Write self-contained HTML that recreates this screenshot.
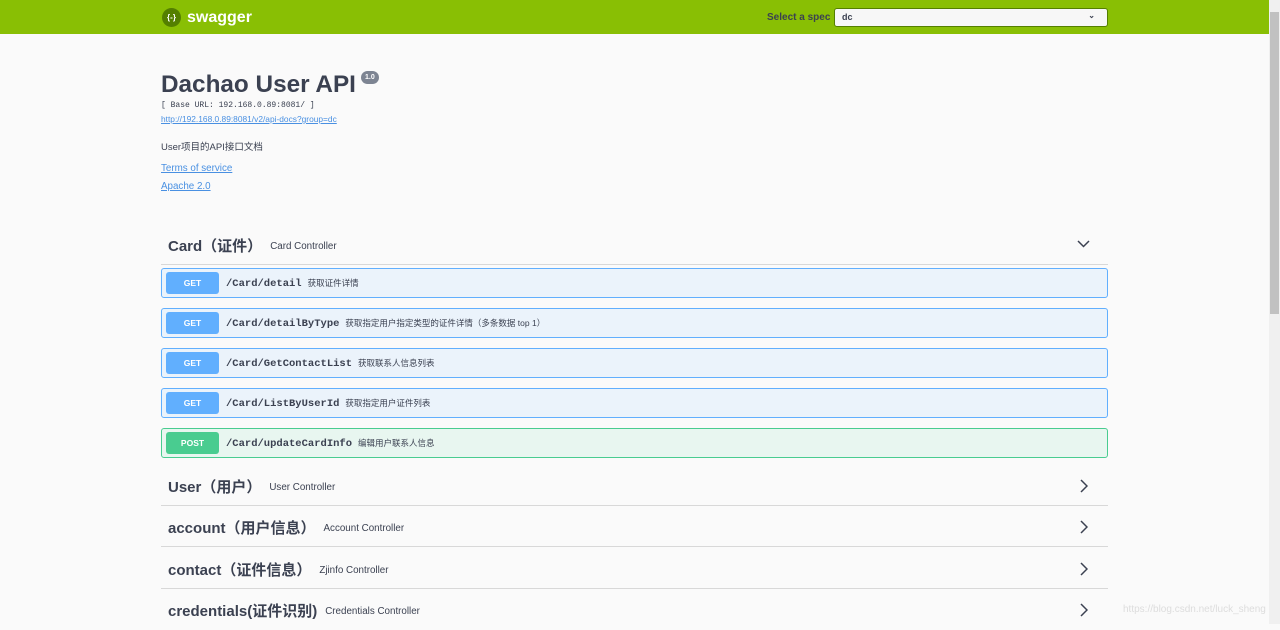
<!DOCTYPE html>
<html><head><meta charset="utf-8"><style>
*{margin:0;padding:0;box-sizing:border-box}
body{width:1280px;height:624px;overflow:hidden;background:#fafafa;font-family:"Liberation Sans","Noto Sans CJK SC",sans-serif;color:#3b4151;position:relative}
.top{position:absolute;left:0;top:0;width:1269px;height:34px;background:#89bf04}
.logo{position:absolute;left:162px;top:8px;width:19px;height:19px;border-radius:50%;background:#547f00;color:#fff;font-size:8px;text-align:center;line-height:19px;font-weight:bold}
.brand{position:absolute;left:187px;top:9px;color:#fff;font-weight:bold;font-size:16px}
.sel-l{position:absolute;left:767px;top:12px;font-size:10px;font-weight:bold;color:#3b4151}
.sel{position:absolute;left:834px;top:8px;width:274px;height:19px;background:#f7f7f7;border:1px solid #547f00;border-radius:3px;font-size:9px;font-weight:bold;padding:3px 7px}
.sel span{position:absolute;right:12px;top:2px;font-size:8px}
.sb{position:absolute;right:0;top:0;width:11px;height:624px;background:#f0f0f0}
.thumb{position:absolute;right:1px;top:12px;width:9px;height:302px;background:#c1c1c1}
h1{position:absolute;left:161px;top:71px;font-size:24.3px;font-weight:bold;color:#3b4151}
.ver{position:absolute;left:361px;top:71px;background:#7d8492;color:#fff;font-size:7px;font-weight:bold;border-radius:8px;padding:3px 4px}
.base{position:absolute;left:161px;top:101px;font-family:"Liberation Mono",monospace;font-size:8px;color:#3b4151}
.a{position:absolute;left:161px;color:#4990e2;text-decoration:underline;font-size:9.8px}
.desc{position:absolute;left:161px;top:139px;font-size:9.5px}
.tag{position:absolute;left:161px;width:947px;height:41px;border-bottom:1px solid #d8d8d8}
.tag b{position:absolute;left:7px;top:11px;font-size:15px}
.tag i{font-style:normal;font-size:9.8px;font-weight:normal;margin-left:8px;vertical-align:2px}
.tag svg{position:absolute;right:18px;top:16px}
.op{position:absolute;left:161px;width:947px;height:30px;border:1px solid #61affe;background:#ebf3fb;border-radius:3px}
.op.post{border-color:#49cc90;background:#e8f6f0}
.m{position:absolute;left:4px;top:3px;width:53px;height:22px;background:#61affe;color:#fff;font-size:8.5px;font-weight:bold;text-align:center;line-height:22px;border-radius:3px}
.post .m{background:#49cc90}
.p{position:absolute;left:64px;top:8px;font-family:"Liberation Mono",monospace;font-weight:bold;font-size:10.5px;color:#3b4151;white-space:nowrap}
.p small{font-family:"Liberation Sans","Noto Sans CJK SC",sans-serif;font-weight:normal;font-size:8.5px;margin-left:6px}
.wm{position:absolute;left:1123px;top:604px;font-size:10px;color:#ddd}
</style></head><body>
<div class="top"><div class="logo">{-}</div><div class="brand">swagger</div>
<div class="sel-l">Select a spec</div><div class="sel">dc<span>⌄</span></div></div>
<div class="sb"><div class="thumb"></div></div>
<h1>Dachao User API</h1><div class="ver">1.0</div>
<div class="base">[ Base URL: 192.168.0.89:8081/ ]</div>
<div class="a" style="top:114px;font-size:8.4px">http://192.168.0.89:8081/v2/api-docs?group=dc</div>
<div class="desc">User项目的API接口文档</div>
<div class="a" style="top:163px">Terms of service</div>
<div class="a" style="top:181px">Apache 2.0</div>
<div class="tag" style="top:224px"><b>Card（证件）<i>Card Controller</i></b><svg width="13" height="8"><path d="M1 1l5.5 5.5L12 1" stroke="#3b4151" stroke-width="1.5" fill="none"/></svg></div>
<div class="op" style="top:268px"><div class="m">GET</div><div class="p">/Card/detail<small>获取证件详情</small></div></div>
<div class="op" style="top:308px"><div class="m">GET</div><div class="p">/Card/detailByType<small>获取指定用户指定类型的证件详情（多条数据 top 1）</small></div></div>
<div class="op" style="top:348px"><div class="m">GET</div><div class="p">/Card/GetContactList<small>获取联系人信息列表</small></div></div>
<div class="op" style="top:388px"><div class="m">GET</div><div class="p">/Card/ListByUserId<small>获取指定用户证件列表</small></div></div>
<div class="op post" style="top:428px"><div class="m">POST</div><div class="p">/Card/updateCardInfo<small>编辑用户联系人信息</small></div></div>
<div class="tag" style="top:465px"><b>User（用户）<i>User Controller</i></b><svg width="8" height="14" style="right:20px;top:14px"><path d="M1 1l6 6-6 6" stroke="#3b4151" stroke-width="1.5" fill="none"/></svg></div>
<div class="tag" style="top:506px"><b>account（用户信息）<i>Account Controller</i></b><svg width="8" height="14" style="right:20px;top:14px"><path d="M1 1l6 6-6 6" stroke="#3b4151" stroke-width="1.5" fill="none"/></svg></div>
<div class="tag" style="top:548px"><b>contact（证件信息）<i>Zjinfo Controller</i></b><svg width="8" height="14" style="right:20px;top:14px"><path d="M1 1l6 6-6 6" stroke="#3b4151" stroke-width="1.5" fill="none"/></svg></div>
<div class="tag" style="top:589px;border:none"><b>credentials(证件识别)<i>Credentials Controller</i></b><svg width="8" height="14" style="right:20px;top:14px"><path d="M1 1l6 6-6 6" stroke="#3b4151" stroke-width="1.5" fill="none"/></svg></div>
<div class="wm">https://blog.csdn.net/luck_sheng</div>
</body></html>
